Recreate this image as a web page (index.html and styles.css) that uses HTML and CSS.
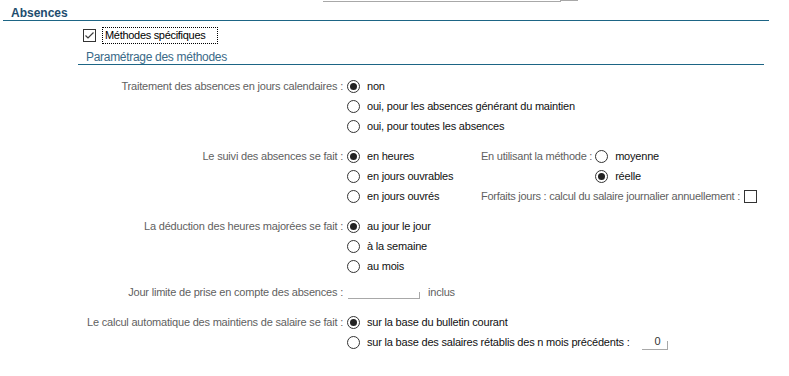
FILE: index.html
```html
<!DOCTYPE html>
<html lang="fr">
<head>
<meta charset="utf-8">
<link rel="stylesheet" href="styles.css">
</head>
<body>
<div class="topstub"><span class="stub-field"></span><span class="stub-btn"></span></div>
<section class="panel">
  <h2 class="title">Absences</h2>
  <div class="inner">
    <div class="check-row">
      <span class="cb"><svg viewBox="0 0 13 13" width="13" height="13"><path d="M2.5 6.5 L5 9 L10.5 3.5" fill="none" stroke="#3c3c3c" stroke-width="1.2"/></svg></span>
      <span class="focus">Méthodes spécifiques</span>
    </div>
    <h3 class="subtitle">Paramétrage des méthodes</h3>
    <div class="form">
      <div class="group">
        <div class="lbl">Traitement des absences en jours calendaires :</div>
        <div class="opts">
          <div class="opt"><span class="radio on"></span>non</div>
          <div class="opt"><span class="radio"></span>oui, pour les absences générant du maintien</div>
          <div class="opt"><span class="radio"></span>oui, pour toutes les absences</div>
        </div>
      </div>
      <div class="group">
        <div class="lbl">Le suivi des absences se fait :</div>
        <div class="split">
          <div class="opts col-a">
            <div class="opt"><span class="radio on"></span>en heures</div>
            <div class="opt"><span class="radio"></span>en jours ouvrables</div>
            <div class="opt"><span class="radio"></span>en jours ouvrés</div>
          </div>
          <div class="col-b">
            <div class="method">
              <div class="mlbl">En utilisant la méthode :</div>
              <div class="opts">
                <div class="opt"><span class="radio"></span>moyenne</div>
                <div class="opt"><span class="radio on"></span>réelle</div>
              </div>
            </div>
            <div class="forfait"><span class="mlbl">Forfaits jours : calcul du salaire journalier annuellement :</span><span class="cb empty"></span></div>
          </div>
        </div>
      </div>
      <div class="group">
        <div class="lbl">La déduction des heures majorées se fait :</div>
        <div class="opts">
          <div class="opt"><span class="radio on"></span>au jour le jour</div>
          <div class="opt"><span class="radio"></span>à la semaine</div>
          <div class="opt"><span class="radio"></span>au mois</div>
        </div>
      </div>
      <div class="group limit">
        <div class="lbl">Jour limite de prise en compte des absences :</div>
        <div class="field-row"><span class="field wide"></span><span class="unit">inclus</span></div>
      </div>
      <div class="group">
        <div class="lbl">Le calcul automatique des maintiens de salaire se fait :</div>
        <div class="opts">
          <div class="opt"><span class="radio on"></span>sur la base du bulletin courant</div>
          <div class="opt"><span class="radio"></span>sur la base des salaires rétablis des n mois précédents :<span class="field small">0</span></div>
        </div>
      </div>
    </div>
  </div>
</section>
</body>
</html>
```
FILE: styles.css
```css
* { box-sizing: border-box; }
html, body { margin: 0; padding: 0; background: #fff; }
body {
  font-family: "Liberation Sans", Arial, sans-serif;
  font-size: 11px;
  letter-spacing: -0.2px;
  color: #000;
  width: 789px;
  height: 376px;
  overflow: hidden;
}
.topstub { display: flex; margin-left: 323px; height: 2px; }
.stub-field { width: 238px; height: 2px; border-bottom: 1px solid #a8a8a8; border-right: 1px solid #a8a8a8; }
.stub-btn { width: 17px; height: 1px; border-bottom: 1px solid #a8a8a8; }

.panel { margin-left: 3px; width: 766px; }
.title {
  margin: 5px 0 0 0;
  padding-left: 8px;
  font-size: 12px;
  font-weight: bold;
  letter-spacing: 0;
  line-height: 13px;
  color: #1e4d6e;
  border-bottom: 1px solid #1d6585;
}
.inner { margin-left: 75px; width: 686px; }
.check-row { display: flex; align-items: center; margin-top: 6px; height: 17px; }
.cb {
  width: 13px; height: 13px;
  border: 1px solid #333;
  background: #fff;
  display: inline-flex; align-items: center; justify-content: center;
  flex: none;
}
.cb svg { display: block; margin: -1px; }
.check-row .cb { margin-left: 5px; }
.focus {
  margin-left: 6px;
  border: 1px dotted #000;
  height: 17px;
  line-height: 15px;
  padding: 0 12px 0 2px;
  letter-spacing: -0.3px;
  color: #000;
}
.subtitle {
  margin: 6px 0 0 0;
  padding-left: 8px;
  font-size: 12px;
  font-weight: normal;
  letter-spacing: -0.3px;
  line-height: 14px;
  color: #3a6a88;
  border-bottom: 1px solid #1d6585;
}
.form { margin-top: 11px; display: flex; flex-direction: column; gap: 10px; }
.group { display: grid; grid-template-columns: 265px auto; column-gap: 4px; align-items: start; }
.lbl { text-align: right; color: #5f5f5f; line-height: 20px; white-space: nowrap; }
.opts { display: flex; flex-direction: column; }
.opt { display: flex; align-items: center; height: 20px; white-space: nowrap; color: #111; }
.radio {
  width: 13px; height: 13px;
  border: 1px solid #333;
  border-radius: 50%;
  margin-right: 7px;
  flex: none;
  position: relative;
  background: #fff;
}
.radio.on::after {
  content: "";
  position: absolute;
  left: 2px; top: 2px;
  width: 7px; height: 7px;
  border-radius: 50%;
  background: #222;
}
.split { display: flex; }
.col-a { width: 134px; }
.col-b { display: flex; flex-direction: column; }
.method { display: flex; align-items: flex-start; }
.mlbl { color: #5f5f5f; line-height: 20px; white-space: nowrap; margin-right: 4px; }
.method .mlbl { margin-right: 3px; letter-spacing: -0.25px; }
.forfait { display: flex; align-items: center; height: 20px; }
.forfait .mlbl { letter-spacing: -0.27px; margin-right: 4px; }
.limit { margin-top: -4px; }
.field-row { display: flex; align-items: center; height: 20px; }
.field {
  display: inline-block;
  border-bottom: 1px solid #a8a8a8;
  border-right: 1px solid #a8a8a8;
  text-align: right;
}
.field.wide { width: 72px; height: 7px; margin-top: 6px; margin-left: 1px; }
.unit { margin-left: 8px; color: #5f5f5f; }
.field.small { width: 26px; height: 9px; margin-left: 12px; margin-top: 7px; line-height: 0; padding-right: 6px; color: #333; }
```
